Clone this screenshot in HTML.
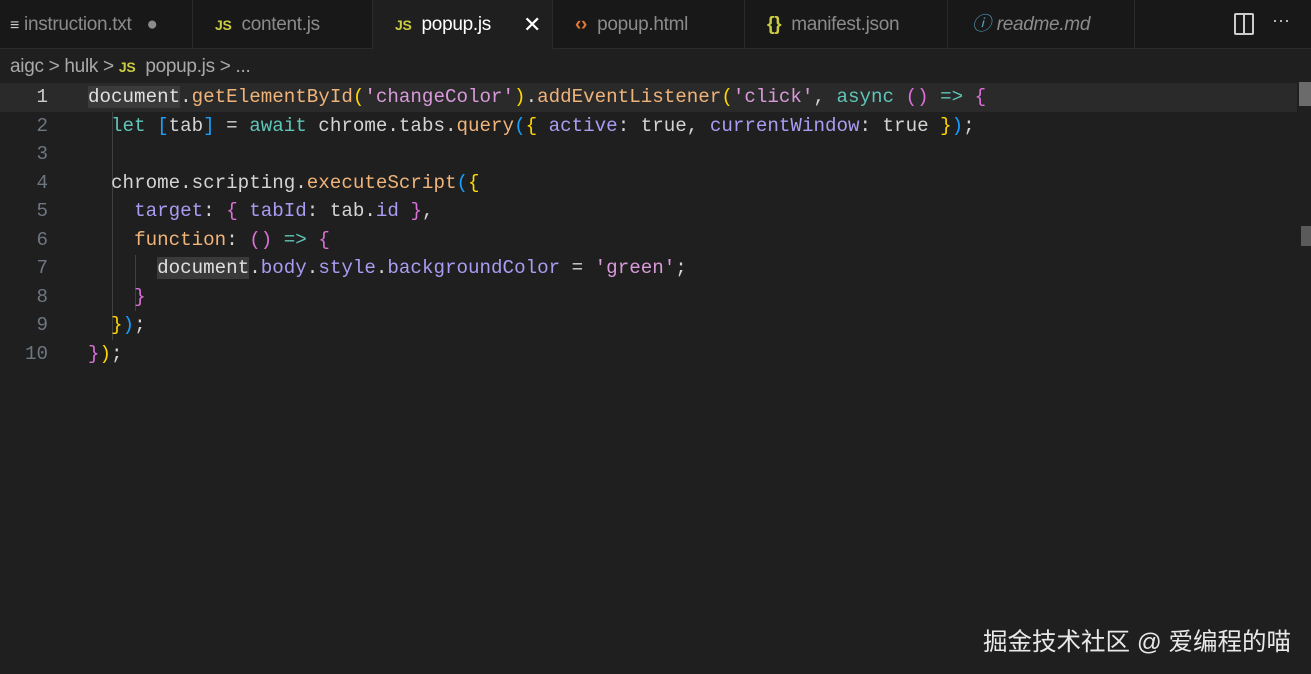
<!DOCTYPE html>
<html><head><meta charset="utf-8"><style>
body{margin:0;width:1311px;height:674px;background:#1f1f1f;overflow:hidden;position:relative;font-family:"Liberation Sans","Noto Sans CJK SC",sans-serif}
.tabs{position:absolute;left:0;top:0;width:1311px;height:48px;background:#181818;border-bottom:1px solid #2b2b2b}
.tab{position:absolute;top:0;height:48px;line-height:50px;font-size:19px;color:#8b8b8b;border-right:1px solid #2b2b2b;box-sizing:border-box;letter-spacing:-0.3px}
.tab.active{background:#1f1f1f;color:#fff;border-bottom:1px solid #1f1f1f;height:49px}
.js{color:#cbcb41;font-weight:bold;font-size:14px;margin-right:10px}
.bc{position:absolute;top:56px;left:10px;font-size:19px;color:#a9a9a9;letter-spacing:-0.3px}
.code{position:absolute;left:0;top:83px;width:1297px;font-family:"Liberation Mono",monospace;font-size:19.2px}
.ln{height:28.5px;line-height:28.5px;white-space:pre;position:relative}
.n{position:absolute;left:0;width:48px;text-align:right;color:#6e7681}
.t{position:absolute;left:88px;color:#d4d4d4}
.hl{background:#2a2a2a}
.w{color:#e0e0e0}.f{color:#f0b47a}.s{color:#d89ad8}.k{color:#5fc5b8}.p{color:#a99cf2}.y{color:#ffd700}.m{color:#da70d6}.b{color:#179fff}.sel{background:#3a3a3a}
</style></head><body>
<div class="tabs">
<div class="tab" style="left:0;width:193px;padding-left:10px"><span style="color:#ccc;font-size:16px">≡</span> instruction.txt <span style="margin-left:10px;color:#8b8b8b">●</span></div>
<div class="tab" style="left:193px;width:180px;padding-left:22px"><span class="js">JS</span>content.js</div>
<div class="tab active" style="left:373px;width:180px;padding-left:22px"><span class="js">JS</span>popup.js<span style="position:absolute;left:150px;font-size:22px">✕</span></div>
<div class="tab" style="left:553px;width:192px;padding-left:22px"><span style="color:#e37933;margin-right:10px;font-weight:bold">‹›</span>popup.html</div>
<div class="tab" style="left:745px;width:203px;padding-left:22px"><span style="color:#cbcb41;margin-right:10px;font-weight:bold">{}</span>manifest.json</div>
<div class="tab" style="left:948px;width:187px;padding-left:24px;font-style:italic"><span style="color:#519aba;margin-right:6px">ⓘ</span>readme.md</div>
<div style="position:absolute;left:1234px;top:13px;width:16px;height:18px;border:2px solid #ccc;border-radius:2px"><div style="position:absolute;left:7px;top:0;width:2px;height:18px;background:#ccc"></div></div>
<div style="position:absolute;left:1272px;top:10px;color:#ccc;font-size:18px">···</div>
</div>
<div class="bc">aigc &gt; hulk &gt; <span class="js">JS</span>popup.js &gt; ...</div>
<div style="position:absolute;left:86px;top:83px;width:2px;height:28px;background:#fff"></div>
<div style="position:absolute;left:112px;top:112px;width:1px;height:228px;background:#404040"></div>
<div style="position:absolute;left:135px;top:255px;width:1px;height:56px;background:#404040"></div>
<div style="position:absolute;left:1299px;top:82px;width:12px;height:24px;background:#6b6b6b"></div>
<div style="position:absolute;left:1301px;top:226px;width:10px;height:20px;background:#5a5a5a"></div>
<div class="code">
<div class="ln hl" style="width:1297px"><span class="n" style="color:#ccc">1</span><span class="t"><span class="w sel">document</span>.<span class="f">getElementById</span><span class="y">(</span><span class="s">'changeColor'</span><span class="y">)</span>.<span class="f">addEventListener</span><span class="y">(</span><span class="s">'click'</span>, <span class="k">async</span> <span class="m">()</span> <span class="k">=&gt;</span> <span class="m">{</span></span></div>
<div class="ln"><span class="n">2</span><span class="t">  <span class="k">let</span> <span class="b">[</span>tab<span class="b">]</span> = <span class="k">await</span> chrome.tabs.<span class="f">query</span><span class="b">(</span><span class="y">{</span> <span class="p">active</span>: true, <span class="p">currentWindow</span>: true <span class="y">}</span><span class="b">)</span>;</span></div>
<div class="ln"><span class="n">3</span></div>
<div class="ln"><span class="n">4</span><span class="t">  chrome.scripting.<span class="f">executeScript</span><span class="b">(</span><span class="y">{</span></span></div>
<div class="ln"><span class="n">5</span><span class="t">    <span class="p">target</span>: <span class="m">{</span> <span class="p">tabId</span>: tab.<span class="p">id</span> <span class="m">}</span>,</span></div>
<div class="ln"><span class="n">6</span><span class="t">    <span class="f">function</span>: <span class="m">()</span> <span class="k">=&gt;</span> <span class="m">{</span></span></div>
<div class="ln"><span class="n">7</span><span class="t">      <span class="w sel">document</span>.<span class="p">body</span>.<span class="p">style</span>.<span class="p">backgroundColor</span> = <span class="s">'green'</span>;</span></div>
<div class="ln"><span class="n">8</span><span class="t">    <span class="m">}</span></span></div>
<div class="ln"><span class="n">9</span><span class="t">  <span class="y">}</span><span class="b">)</span>;</span></div>
<div class="ln"><span class="n">10</span><span class="t"><span class="m">}</span><span class="y">)</span>;</span></div>
</div>
<div style="position:absolute;right:20px;top:623px;font-size:24.5px;color:#e8e8e8">掘金技术社区 @ 爱编程的喵</div>
</body></html>
